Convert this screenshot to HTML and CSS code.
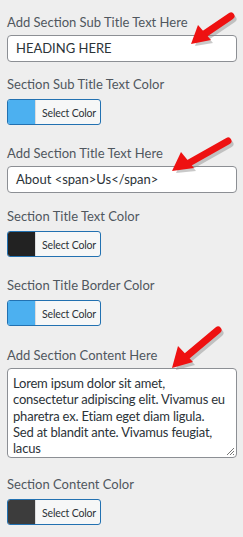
FILE: index.html
```html
<!DOCTYPE html>
<html>
<head>
<meta charset="utf-8">
<link rel="stylesheet" href="styles.css">
</head>
<body>
<div class="panel">
  <div class="field f1">
    <label class="label">Add Section Sub Title Text Here</label>
    <div class="input">HEADING HERE</div>
  </div>
  <div class="field f2">
    <label class="label">Section Sub Title Text Color</label>
    <div class="color-btn"><span class="swatch blue"></span><span class="btn-text">Select Color</span></div>
  </div>
  <div class="field f3">
    <label class="label">Add Section Title Text Here</label>
    <div class="input">About &lt;span&gt;Us&lt;/span&gt;</div>
  </div>
  <div class="field f4">
    <label class="label">Section Title Text Color</label>
    <div class="color-btn"><span class="swatch black"></span><span class="btn-text">Select Color</span></div>
  </div>
  <div class="field f5">
    <label class="label">Section Title Border Color</label>
    <div class="color-btn"><span class="swatch blue"></span><span class="btn-text">Select Color</span></div>
  </div>
  <div class="field f6">
    <label class="label">Add Section Content Here</label>
    <div class="textarea">Lorem ipsum dolor sit amet,<br>consectetur adipiscing elit. Vivamus eu<br>pharetra ex. Etiam eget diam ligula.<br>Sed at blandit ante. Vivamus feugiat,<br>lacus<svg class="grip" width="9" height="9" viewBox="0 0 9 9"><path d="M8 1L1 8M8 4L4 8M8 7L7 8" stroke="#777" stroke-width="1"/></svg></div>
  </div>
  <div class="field f7">
    <label class="label">Section Content Color</label>
    <div class="color-btn"><span class="swatch dark"></span><span class="btn-text">Select Color</span></div>
  </div>
</div>
<svg class="arrow a1" width="60" height="45" viewBox="0 0 60 45"><g transform="translate(2,3)" fill="#8a8a8a" opacity="0.45"><line x1="46" y1="6" x2="18" y2="25" stroke="#8a8a8a" stroke-width="7" stroke-linecap="round"/><polygon points="8,33 14,16 26,30"/></g><line x1="46" y1="6" x2="18" y2="25" stroke="#ee1111" stroke-width="7" stroke-linecap="round"/><polygon points="6,34 13,15 26,30" fill="#ee1111"/></svg>
<svg class="arrow a2" width="70" height="42" viewBox="0 0 70 42"><g transform="translate(2,3)" opacity="0.45"><line x1="61" y1="5" x2="22" y2="27" stroke="#8a8a8a" stroke-width="7" stroke-linecap="round"/><polygon points="7,34 15,17 27,32" fill="#8a8a8a"/></g><line x1="61" y1="5" x2="22" y2="27" stroke="#ee1111" stroke-width="7" stroke-linecap="round"/><polygon points="5,35 14,16 27,32" fill="#ee1111"/></svg>
<svg class="arrow a3" width="62" height="50" viewBox="0 0 62 50"><g transform="translate(2,3)" opacity="0.45"><line x1="53" y1="5" x2="22" y2="31" stroke="#8a8a8a" stroke-width="7" stroke-linecap="round"/><polygon points="9,42 14,22 28,37" fill="#8a8a8a"/></g><line x1="53" y1="5" x2="22" y2="31" stroke="#ee1111" stroke-width="7" stroke-linecap="round"/><polygon points="7,43 13,21 28,37" fill="#ee1111"/></svg>
</body>
</html>
```
FILE: styles.css
```css
html, body {
  margin: 0;
  padding: 0;
  background: #eeeeee;
}
body {
  font-family: Lato, "Open Sans", sans-serif;
  position: relative;
  width: 243px;
  height: 537px;
  overflow: hidden;
}
.panel {
  padding: 12px 6px 0 7px;
  display: flex;
  flex-direction: column;
}
.field {
  display: flex;
  flex-direction: column;
  align-items: flex-start;
}
.f2 { margin-top: 12px; }
.f3 { margin-top: 18px; }
.f4 { margin-top: 13px; }
.f5 { margin-top: 18px; }
.f6 { margin-top: 19px; }
.f7 { margin-top: 16px; }
.label {
  display: block;
  font-size: 13px;
  line-height: 20px;
  color: #50575e;
  margin-bottom: 3px;
}
.input {
  box-sizing: border-box;
  width: 230px;
  height: 27px;
  border: 1px solid #8c8f94;
  border-radius: 4px;
  background: #fff;
  padding: 0 8px;
  font-size: 13px;
  line-height: 25px;
  color: #2c3338;
  white-space: nowrap;
}
.textarea {
  position: relative;
  box-sizing: border-box;
  width: 230px;
  height: 90px;
  border: 1px solid #8c8f94;
  border-radius: 4px;
  background: #fff;
  padding: 6px 5px 0;
  font-size: 13px;
  letter-spacing: -0.2px;
  line-height: 16.25px;
  color: #2c3338;
  white-space: nowrap;
  overflow: hidden;
}
.grip {
  position: absolute;
  right: 1px;
  bottom: 1px;
}
.color-btn {
  box-sizing: border-box;
  display: flex;
  width: 94px;
  height: 26px;
  margin-top: 2px;
  border: 1px solid #2271b1;
  border-radius: 3px;
  overflow: hidden;
  background: #f6f7f7;
}
.swatch {
  width: 27px;
  height: 100%;
  border-right: 1px solid #dcdcde;
}
.swatch.blue { background: #4cb0f0; }
.swatch.black { background: #222222; }
.swatch.dark { background: #3c3c3c; }
.btn-text {
  flex: 1;
  font-size: 10.5px;
  letter-spacing: -0.15px;
  line-height: 24px;
  padding-top: 1px;
  color: #2c3338;
  padding-left: 6px;
  white-space: nowrap;
}
.arrow {
  position: absolute;
}
.a1 { left: 185px; top: 10px; }
.a2 { left: 167px; top: 136px; }
.a3 { left: 165px; top: 325px; }
```
